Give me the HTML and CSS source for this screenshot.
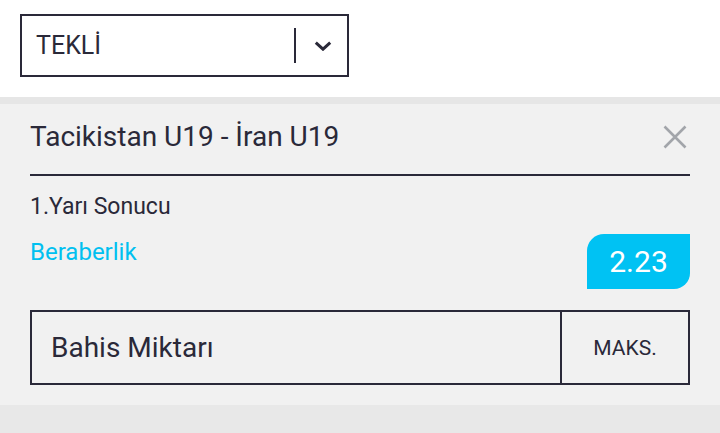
FILE: index.html
```html
<!DOCTYPE html>
<html lang="tr">
<head>
<meta charset="utf-8">
<title>Bahis Kuponu</title>
<link rel="stylesheet" href="styles.css">
</head>
<body>
<div class="top">
  <div class="select">
    <span class="select-label">TEKLİ</span>
    <span class="select-sep"></span>
    <span class="select-arrow">
      <svg width="18" height="10" viewBox="0 0 18 10"><polyline points="1.8,1.6 9,8.2 16.2,1.6" fill="none" stroke="#2a2939" stroke-width="3"/></svg>
    </span>
  </div>
</div>
<div class="panel">
  <div class="header">
    <span class="title">Tacikistan U19 - İran U19</span>
    <span class="close">
      <svg width="24" height="24" viewBox="0 0 24 24"><path d="M1.5 1.5 L22.5 22.5 M22.5 1.5 L1.5 22.5" stroke="#a2a5aa" stroke-width="2.6" fill="none"/></svg>
    </span>
  </div>
  <div class="market">1.Yarı Sonucu</div>
  <div class="pick-row">
    <span class="pick">Beraberlik</span>
    <span class="odds">2.23</span>
  </div>
  <div class="stake">
    <span class="stake-label">Bahis Miktarı</span>
    <span class="stake-max">MAKS.</span>
  </div>
</div>
<div class="footer"></div>
</body>
</html>
```
FILE: styles.css
```css
html, body {
  margin: 0;
  padding: 0;
}
body {
  font-family: Roboto, "Liberation Sans", sans-serif;
  color: #2a2939;
  background: #e8e8e8;
  width: 720px;
  height: 433px;
  overflow: hidden;
}
.top {
  background: #ffffff;
  padding: 14px 20px 20px;
  border-bottom: 7px solid #e6e6e6;
}
.select {
  width: 325px;
  height: 59px;
  border: 2px solid #2a2939;
  display: flex;
  align-items: center;
}
.select-label {
  flex: 1;
  padding-left: 14px;
  font-size: 25px;
  line-height: 30px;
}
.select-sep {
  width: 2px;
  height: 35px;
  background: #2a2939;
}
.select-arrow {
  width: 51px;
  display: flex;
  justify-content: center;
  align-items: center;
  padding-top: 1px;
  padding-left: 3px;
  box-sizing: border-box;
}
.panel {
  background: #f1f1f1;
  padding: 0 30px 20px;
}
.header {
  height: 66px;
  padding-bottom: 4px;
  border-bottom: 2px solid #2a2939;
  display: flex;
  align-items: center;
  justify-content: space-between;
}
.title {
  font-size: 28px;
  line-height: 34px;
}
.close {
  display: flex;
  margin-right: 3px;
}
.market {
  margin-top: 17px;
  font-size: 23px;
  line-height: 27px;
}
.pick-row {
  margin-top: 14px;
  display: flex;
  justify-content: space-between;
  align-items: flex-start;
}
.pick {
  margin-top: 4px;
  font-size: 24px;
  line-height: 28px;
  color: #00c0f0;
}
.odds {
  width: 103px;
  height: 55px;
  background: #00c2f3;
  color: #ffffff;
  border-radius: 17px 0 16px 0;
  display: flex;
  align-items: center;
  justify-content: center;
  font-size: 30px;
}
.stake {
  margin-top: 21px;
  height: 71px;
  border: 2px solid #2a2939;
  display: flex;
}
.stake-label {
  flex: 1;
  display: flex;
  align-items: center;
  padding-left: 19px;
  font-size: 28px;
  border-right: 2px solid #2a2939;
}
.stake-max {
  width: 126px;
  display: flex;
  align-items: center;
  justify-content: center;
  font-size: 21px;
}
.footer {
  height: 28px;
  background: #e8e8e8;
}
```
